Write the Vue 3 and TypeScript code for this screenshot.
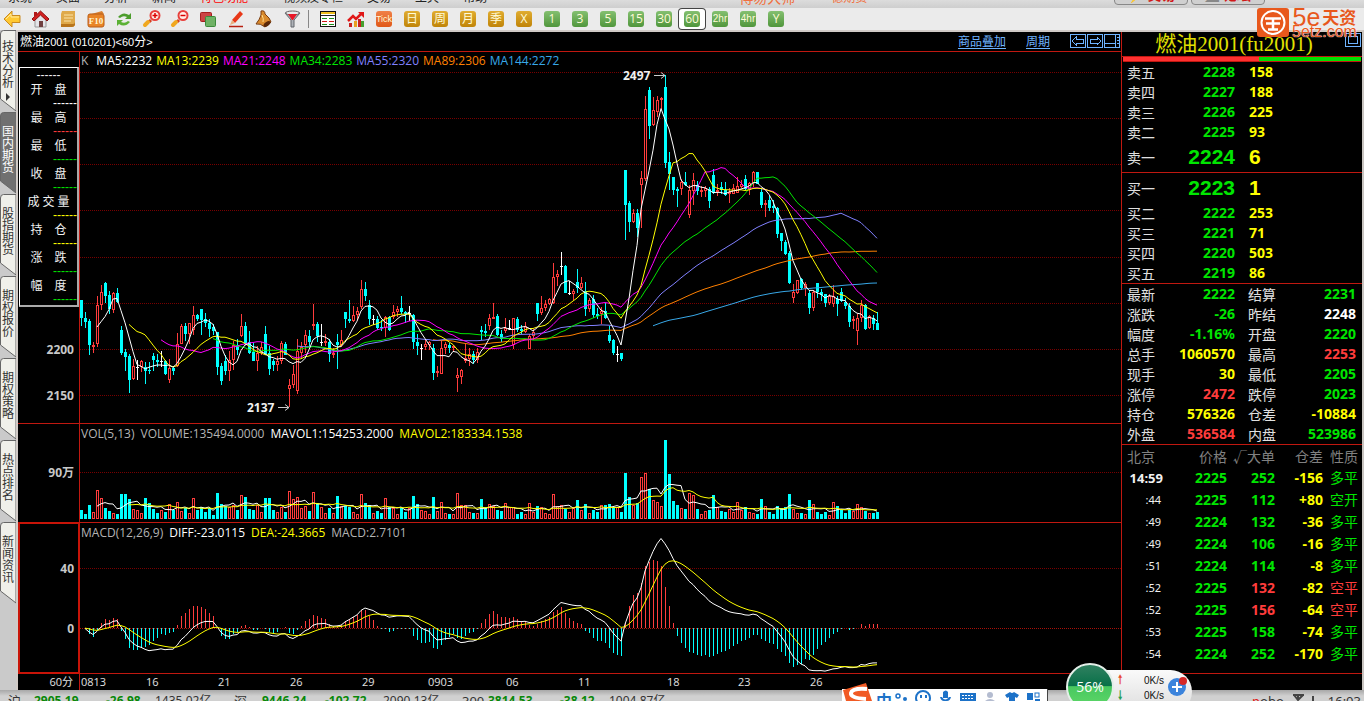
<script setup lang="ts">
type Kind = 'd' | 'u' | 'w'
interface Candle { kind: Kind; x: number; high: number; top: number; bottom: number; low: number; close: number; vol: number }

const STEP = 4
const PRICE_TOP = 70
const VOL_TOP = 442
const VOL_BASE = 519
const MACD_TOP = 541
const MACD_ZERO = 628
const MACD_SCALE = 1.63

// kind, high, body top, body bottom, low (canvas rows)
const rows = `d300 300 318 326,d312 318 322 328,d319 321 345 355,u342 345 347 353,u296 305 344 347,u285 292 305 310,d282 283 296 303,d291 295 309 314,u292 293 310 313,d288 293 302 303,
d326 330 353 355,d349 352 357 371,d354 356 380 393,u359 366 379 380,w360 367 367 380,u360 361 367 372,d362 367 371 384,d362 370 371 374,d353 356 360 371,d354 360 362 367,
w351 361 361 367,d360 361 374 375,u359 368 380 383,d366 368 371 375,u333 344 366 367,u324 326 344 344,d323 326 334 341,u323 323 334 344,u306 315 330 335,d314 315 319 321,
d309 309 320 335,d313 319 323 327,d319 323 329 337,d324 327 331 335,d332 332 367 375,d363 366 381 385,d355 361 371 375,u351 360 371 381,u341 345 360 370,d339 345 350 355,
u314 326 336 337,d322 326 344 345,d331 342 353 354,d343 352 361 361,u346 353 361 371,u342 347 353 355,d326 334 354 355,d346 353 369 375,d359 361 365 371,u356 361 365 371,
u341 343 361 364,d342 344 355 355,u379 385 389 407,u365 374 385 388,u339 351 391 394,u342 347 353 358,u330 335 345 353,d330 336 342 347,u304 324 326 330,d322 324 336 342,
w324 342 342 346,u334 341 343 346,d339 342 354 362,u348 353 355 358,d334 342 345 369,u330 340 345 347,d312 312 319 328,d300 319 321 323,u306 315 321 322,u307 311 315 320,
u280 289 307 309,d282 289 296 301,d300 305 319 325,w315 319 319 325,d316 319 328 330,d320 327 328 331,u316 317 328 337,d316 317 330 331,u305 312 317 319,u306 309 312 317,
d296 308 312 314,d311 312 314 323,w306 313 313 321,d314 315 342 349,d334 342 346 355,w344 348 348 360,u340 344 347 350,u341 342 345 350,d344 348 373 380,u366 371 373 377,
u340 348 374 374,u342 344 348 354,d343 345 348 353,u345 346 348 351,u368 375 378 392,u369 370 377 384,u344 358 361 363,u348 354 359 366,d351 354 360 364,u348 352 360 363,
d326 330 332 340,d324 331 333 337,u314 318 326 330,u303 317 319 319,d314 316 335 336,d330 334 339 342,u318 328 331 333,w320 328 328 330,u318 318 345 349,d317 319 330 332,
d325 329 331 334,u322 326 332 333,u334 336 349 349,u329 332 336 340,d303 303 314 321,u296 308 313 315,u300 304 308 311,u298 299 304 305,u263 277 303 304,u270 274 277 286,
w252 266 266 275,d265 266 293 293,w281 293 293 295,u289 291 294 300,d269 282 288 293,u277 283 288 289,d282 291 309 316,u298 300 309 312,d295 299 315 318,d308 314 316 319,
u307 311 314 324,d303 311 318 319,d326 335 341 343,d339 340 353 355,w346 354 354 362,d353 353 359 361,d170 170 205 240,d201 203 222 232,u209 213 222 223,d209 213 228 237,
u171 178 185 228,u96 109 179 181,d87 90 126 139,u97 110 125 126,u96 100 112 117,u97 98 100 110,d75 87 163 168,d152 162 174 190,d177 177 190 195,d187 189 191 207,
u179 182 189 195,d172 182 185 186,u185 190 215 218,u173 180 191 205,d181 185 191 195,u186 190 192 197,u186 188 191 197,d187 189 201 208,d169 175 193 194,u184 190 192 196,
d182 187 190 194,d182 190 195 196,u188 192 194 203,u184 188 194 194,u177 186 193 193,u180 184 187 188,d175 179 189 190,u182 183 190 195,u171 172 183 187,d172 172 184 184,
d188 192 205 208,u200 203 205 217,d196 200 208 211,d200 206 208 213,d207 208 234 238,d233 233 241 251,d240 242 254 255,d251 253 283 284,u284 292 298 303,u280 280 293 294,
d278 279 288 290,u282 284 288 296,d290 293 308 314,u290 292 308 311,d283 283 292 298,d289 292 295 301,d294 294 303 307,u294 296 303 305,u285 296 304 307,d296 299 304 316,
d288 292 301 302,d298 302 306 309,d303 306 322 327,u316 319 321 329,u314 318 331 345,u300 305 318 322,d304 305 329 330,u315 316 328 329,d315 318 324 330,d312 323 330 330`

const volumes = [
  9, 5, 14, 7, 29, 21, 11, 8, 6, 5, 25, 25, 20, 10, 9, 6, 21, 16, 10, 6,
  9, 7, 15, 9, 17, 8, 11, 6, 21, 9, 12, 7, 11, 4, 26, 15, 13, 12, 14, 9,
  24, 22, 10, 9, 14, 7, 21, 21, 9, 7, 12, 7, 28, 20, 22, 11, 13, 8, 27, 16,
  12, 6, 11, 6, 23, 13, 13, 12, 7, 5, 25, 16, 14, 6, 8, 6, 21, 12, 11, 5,
  11, 7, 11, 23, 15, 9, 8, 5, 22, 8, 17, 6, 5, 5, 26, 14, 14, 7, 6, 6,
  20, 12, 15, 13, 9, 8, 16, 12, 12, 5, 7, 5, 16, 7, 13, 12, 6, 5, 25, 13,
  14, 10, 7, 11, 19, 9, 15, 6, 9, 7, 14, 14, 15, 12, 12, 7, 46, 22, 14, 16,
  42, 46, 30, 19, 17, 13, 79, 45, 18, 14, 11, 10, 26, 24, 10, 5, 8, 9, 24, 12,
  8, 7, 10, 7, 17, 9, 12, 7, 6, 5, 20, 13, 7, 5, 13, 11, 12, 25, 10, 6,
  6, 5, 19, 15, 7, 5, 7, 4, 17, 13, 9, 6, 9, 8, 15, 12, 8, 6, 6, 7,
]

const candles: Candle[] = rows.split(',').map((raw, i) => {
  const s = raw.trim()
  const kind = s[0] as Kind
  const [high, top, bottom, low] = s.slice(1).split(' ').map(Number)
  return { kind, x: i * STEP, high, top, bottom, low, close: kind === 'u' ? top : bottom, vol: volumes[i] }
})
const closes = candles.map(c => c.close)
const color = (k: Kind) => (k === 'u' ? '#ff3c3c' : k === 'd' ? '#00ffff' : '#ffffff')

function average(values: number[], n: number): [number, number][] {
  const out: [number, number][] = []
  let sum = 0
  values.forEach((v, i) => {
    sum += v
    if (i >= n) sum -= values[i - n]
    if (i >= n - 1) out.push([i * STEP + 1, sum / n])
  })
  return out
}
function ema(values: number[], n: number): number[] {
  let e = values[0]
  return values.map(v => (e = e + (2 / (n + 1)) * (v - e)))
}
const path = (pts: [number, number][], f: (v: number) => number) =>
  pts.map(([x, v]) => `${x},${f(v).toFixed(1)}`).join(' ')

const maLines = [
  { n: 144, value: 2272, c: '#38a8e8' }, { n: 89, value: 2306, c: '#ff8000' }, { n: 55, value: 2320, c: '#8080ff' },
  { n: 34, value: 2283, c: '#00e600' }, { n: 21, value: 2248, c: '#ff00ff' }, { n: 13, value: 2239, c: '#ffff00' }, { n: 5, value: 2232, c: '#ffffff' },
].map(m => ({ ...m, pts: path(average(closes, m.n), v => v - PRICE_TOP) }))
const maLegend = [...maLines].reverse()

const volLines = [{ n: 5, c: '#ffffff' }, { n: 13, c: '#ffff00' }]
  .map(m => ({ ...m, pts: path(average(volumes, m.n), v => VOL_BASE - VOL_TOP - v) }))

const fast = ema(closes, 12)
const slow = ema(closes, 26)
const diff = fast.map((v, i) => v - slow[i])
const dea = ema(diff, 9)
const macdY = (v: number) => MACD_ZERO - MACD_TOP + v * MACD_SCALE
const toPts = (a: number[]) => a.map((v, i) => [i * STEP + 1, v] as [number, number]).slice(1)
const diffLine = path(toPts(diff), macdY)
const deaLine = path(toPts(dea), macdY)
const hist = diff.map((v, i) => {
  const h = Math.round((v - dea[i]) * 2 * MACD_SCALE)
  return { x: i * STEP + 1, y: MACD_ZERO - MACD_TOP + Math.min(h, 0), h: Math.abs(h), up: h < 0 }
})

const priceGrid = [72, 118, 164, 210, 257, 303, 349, 395]
const priceLabels = [{ t: '2250', y: 307 }, { t: '2200', y: 354 }, { t: '2150', y: 400 }]
const dates = [
  { t: '0813', x: 1 }, { t: '16', x: 66 }, { t: '21', x: 138 }, { t: '26', x: 210 }, { t: '29', x: 282 }, { t: '0903', x: 348 },
  { t: '06', x: 426 }, { t: '11', x: 498 }, { t: '18', x: 587 }, { t: '23', x: 658 }, { t: '26', x: 730 },
]

const menus = ['系统', '页面', '分析', '新闻', '特色功能', '视频及专栏', '交易', '工具', '帮助']
const tabs = ['技术分析', '国内期货', '股指期货', '期权报价', '期权策略', '热点排名', '新闻资讯']
const periods = [
  { t: '日', c: 'gold' }, { t: '周', c: 'gold' }, { t: '月', c: 'gold' }, { t: '季', c: 'gold' }, { t: 'X', c: 'gold' },
  { t: '1', c: 'green' }, { t: '3', c: 'green' }, { t: '5', c: 'green' }, { t: '15', c: 'green' }, { t: '30', c: 'green' },
  { t: '60', c: 'green' }, { t: '2hr', c: 'green slim' }, { t: '4hr', c: 'green slim' }, { t: 'Y', c: 'green' },
]
const info = [
  { l: '开盘', c: 'white' }, { l: '最高', c: 'red' }, { l: '最低', c: 'lime' }, { l: '收盘', c: 'lime' },
  { l: '成交量', c: 'yellow' }, { l: '持仓', c: 'yellow' }, { l: '涨跌', c: 'lime' }, { l: '幅度', c: 'lime' },
]
const asks = [['卖五', '2228', '158'], ['卖四', '2227', '188'], ['卖三', '2226', '225'], ['卖二', '2225', '93'], ['卖一', '2224', '6']]
const bids = [['买一', '2223', '1'], ['买二', '2222', '253'], ['买三', '2221', '71'], ['买四', '2220', '503'], ['买五', '2219', '86']]
const stats = [
  ['最新', '2222', 'lime', '结算', '2231', 'lime'], ['涨跌', '-26', 'lime', '昨结', '2248', 'white'],
  ['幅度', '-1.16%', 'lime', '开盘', '2220', 'lime'], ['总手', '1060570', 'yellow', '最高', '2253', 'red'],
  ['现手', '30', 'yellow', '最低', '2205', 'lime'], ['涨停', '2472', 'red', '跌停', '2023', 'lime'],
  ['持仓', '576326', 'yellow', '仓差', '-10884', 'yellow'], ['外盘', '536584', 'red', '内盘', '523986', 'lime'],
]
const ticks = [
  ['14:59', '2225', '252', '-156', '多平', 'lime'], [':44', '2225', '112', '+80', '空开', 'lime'],
  [':49', '2224', '132', '-36', '多平', 'lime'], [':49', '2224', '106', '-16', '多平', 'lime'],
  [':51', '2224', '114', '-8', '多平', 'lime'], [':52', '2225', '132', '-82', '空平', 'red'],
  [':52', '2225', '156', '-64', '空平', 'red'], [':53', '2225', '158', '-74', '多平', 'lime'],
  [':54', '2224', '252', '-170', '多平', 'lime'],
]
const indices = [
  { n: '沪', v: '2905.19', d: '-26.98', a: '1435.02亿' },
  { n: '深', v: '9446.24', d: '-102.72', a: '2090.13亿' },
  { n: '300', v: '3814.53', d: '-38.12', a: '1004.87亿' },
]
</script>

<template>
  <div class="app">
    <nav class="menubar">
      <a v-for="m in menus" :key="m" href="#" :class="{ hot: m === '特色功能' }">{{ m }}</a>
      <span class="brand">博易大师</span><span class="brand second">一德期货</span>
      <span class="menu-buttons">
        <button type="button"><i class="bolt">⚡</i>交易</button>
        <button type="button"><i>◢</i>论坛</button>
      </span>
    </nav>

    <div class="toolbar">
      <button type="button" aria-label="后退"><svg width="24" height="22"><path d="M4 11 12 3v4.500h8v7h-8V19z" fill="#ffc832" stroke="#c98a20" /><path d="M6 11l5-5v3h8" fill="none" stroke="#ffe9a0" /></svg></button>
      <button type="button" aria-label="首页"><svg width="24" height="22"><path d="M7 11v8h11v-8l-5-5z" fill="#e4e4e8" stroke="#999" /><path d="M4 11 12.500 3 21 11l-2 2-6.500-6L6 13z" fill="#d42020" stroke="#8c1010" /><path d="M6 4h3v3l-3 2z" fill="#b01818" /><path d="M11 13h4v6h-4z" fill="#704040" /></svg></button>
      <button type="button" aria-label="笔记"><svg width="24" height="22"><path d="M6 3h13v14q-1 2-3 2H5V6z" fill="#dfa94a" /><path d="M8 7h9M8 10h9M8 13h7" stroke="#fbe3a6" /><path d="M5 16h12q2 0 2-2v3q-1 2-3 2H5z" fill="#b9761c" /></svg></button>
      <button type="button" aria-label="F10"><svg width="24" height="22"><path d="M4 7 18 3l2 3H6z" fill="#d98030" /><rect x="4" y="6" width="16" height="13" rx="2" fill="#e98426" stroke="#b85c18" /><text x="12" y="16" text-anchor="middle" font-size="9" font-weight="700" font-family="Liberation Serif" fill="#fff4d0">F10</text></svg></button>
      <button type="button" aria-label="刷新"><svg width="24" height="22"><path d="M6 9q5-6 11-2l2-2v6h-6l2-2q-4-2-7 1z" fill="#4c9d2c" /><path d="M18 14q-5 6-11 2l-2 2v-6h6l-2 2q4 2 7-1z" fill="#5bb135" /></svg></button>
      <button type="button" aria-label="放大"><svg width="24" height="22"><path d="m11 12-2 2" stroke="#d84020" stroke-width="3" /><path d="m8 14-3 3" stroke="#f0a820" stroke-width="4" stroke-linecap="round" /><circle cx="15" cy="7.500" r="4.500" fill="#fff0e8" stroke="#e8403c" stroke-width="2" /><path d="M12.500 7.500h5M15 5v5" stroke="#d00" stroke-width="1.500" /></svg></button>
      <button type="button" aria-label="缩小"><svg width="24" height="22"><path d="m11 12-2 2" stroke="#d84020" stroke-width="3" /><path d="m8 14-3 3" stroke="#f0a820" stroke-width="4" stroke-linecap="round" /><circle cx="15" cy="7.500" r="4.500" fill="#fff0e8" stroke="#e8403c" stroke-width="2" /><path d="M12.500 7.500h5" stroke="#d00" stroke-width="1.500" /></svg></button>
      <button type="button" aria-label="叠加"><svg width="24" height="22"><rect x="4.500" y="4.500" width="11" height="9" rx="1" fill="#cc4444" stroke="#a42020" /><rect x="9.500" y="8.500" width="10" height="10" rx="1" fill="#6fb266" stroke="#3c8a3c" /></svg></button>
      <button type="button" aria-label="画线"><svg width="24" height="22"><path d="m8 12 8-9 3 3-8 9z" fill="#e83818" /><path d="m8 12 3 3-5 2z" fill="#e8b080" /><path d="M5 18.500h14" stroke="#b82010" stroke-width="1.500" /></svg></button>
      <button type="button" aria-label="预警"><svg width="24" height="22"><path d="M9 3q4-1 4 3 5 4 6 8l-6 5Q8 15 4 16q4-5 5-9z" fill="#d98a2c" stroke="#7a3c10" /><ellipse cx="15" cy="16" rx="4" ry="2" transform="rotate(-35 15 16)" fill="#5a2808" /><path d="M10 7q2 4 1 7" stroke="#ffdc8c" fill="none" /></svg></button>
      <button type="button" aria-label="筛选"><svg width="24" height="22"><path d="m5 5 6 7v7h3v-7l6-7z" fill="#aeb2b8" stroke="#62666c" /><ellipse cx="12.500" cy="5" rx="7" ry="2" fill="#e8e8ea" stroke="#666" /><path d="M8 6h9l-4 6h-1z" fill="#e81828" /></svg></button>
      <span class="sep"></span>
      <button type="button" aria-label="报价"><svg width="24" height="22" shape-rendering="crispEdges"><rect x="4.500" y="3.500" width="15" height="15" fill="#fff" stroke="#111" /><path d="M5 5h14" stroke="#f0c020" stroke-width="2" /><path d="M5 7.500h14" stroke="#222" /><path d="M6 10.500h5m2 0h5M6 16.500h5m2 0h5" stroke="#189018" /><path d="M6 13.500h5m2 0h5" stroke="#d01818" /></svg></button>
      <button type="button" aria-label="走势"><svg width="24" height="22"><path d="M5 15h3v4H5zM14 11h3v8h-3z" fill="#c82020" /><path d="M10 13h3v6h-3z" fill="#e8a020" /><path d="M17 13h3v6h-3z" fill="#48a030" /><path d="m4 13 5-5 3 3 6-6" fill="none" stroke="#e01818" stroke-width="2.500" /><path d="M14 4h6v6z" fill="#e01818" /></svg></button>
      <button type="button"><span class="chip tick">Tick</span></button>
      <button v-for="p in periods" :key="p.t" type="button" :class="{ current: p.t === '60' }"><span class="chip" :class="p.c">{{ p.t }}</span></button>
    </div>

    <main class="body">
      <div class="tabs">
        <div v-for="(t, i) in tabs" :key="t" class="tab" :class="{ active: i === 1 }">
          <svg class="tab-shape" width="16" height="82"><path d="M0.500 69V4q0-3.500 3-3.500H16V81z" /></svg>
          <button type="button" :class="{ first: i === 0 }">{{ t }}<i v-if="i === 0"></i></button>
        </div>
      </div>

      <section class="chart">
        <header class="head">
          <h1><b>燃油</b>2001 (010201)&lt;60<b>分</b>&gt;</h1>
          <div class="links">
            <a href="#">商品叠加</a><a href="#">周期</a>
            <svg width="51" height="15" fill="none" stroke="#6fb4ff" shape-rendering="crispEdges">
              <rect x="0.500" y="0.500" width="15" height="13" /><rect x="17.500" y="0.500" width="15" height="13" /><rect x="34.500" y="0.500" width="15" height="13" />
              <path d="m2 7 4-4v2h7v4H6v2zM31 7l-4-4v2h-7v4h7v2zM34 9.500h11M45.500 1v12M47 3.500h2M47 6.500h2M47 9.500h2" />
            </svg>
          </div>
        </header>

        <div class="pane">
          <div class="axis">
            <svg width="61" height="371"><text v-for="l in priceLabels" :key="l.t" x="56" :y="l.y - 52" text-anchor="end" class="label">{{ l.t }}</text></svg>
            <div class="info">
              <p class="dash center">------</p>
              <template v-for="r in info" :key="r.l">
                <p class="name"><span v-for="ch in r.l" :key="ch">{{ ch }}</span></p>
                <p class="dash" :class="r.c">------</p>
              </template>
            </div>
          </div>
          <div class="plot">
            <div class="legend"><span class="gray k">K</span><span v-for="m in maLegend" :key="m.n" :style="{ color: m.c }">MA{{ m.n }}:{{ m.value }}</span></div>
            <svg class="canvas" height="353">
              <line v-for="y in priceGrid" :key="y" x1="0" x2="100%" :y1="y - 70 + 0.5" :y2="y - 70 + 0.5" class="grid" />
              <g shape-rendering="crispEdges">
                <g v-for="c in candles" :key="c.x">
                  <rect :x="c.x + 1" :y="c.high - PRICE_TOP" width="1" :height="Math.max(1, c.low - c.high)" :fill="color(c.kind)" />
                  <rect :x="c.x" :y="c.top - PRICE_TOP" width="3" :height="Math.max(1, c.bottom - c.top)" :fill="color(c.kind)" />
                  <rect v-if="c.kind === 'u' && c.bottom - c.top > 2" :x="c.x + 1" :y="c.top - PRICE_TOP + 1" width="1" :height="c.bottom - c.top - 2" fill="#000" />
                </g>
              </g>
              <polyline v-for="m in maLines" :key="m.n" :points="m.pts" fill="none" :stroke="m.c" />
              <text x="543" y="10" class="mark">2497</text><path d="M574 5.500h11m-4-3 4 3-4 3" class="arrow" />
              <text x="167" y="342" class="mark">2137</text><path d="M198 337.500h11m-4-3 4 3-4 3" class="arrow" />
            </svg>
          </div>
        </div>

        <div class="pane">
          <div class="axis"><svg width="61" height="98"><text x="56" y="53" text-anchor="end" class="label">90万</text></svg></div>
          <div class="plot">
            <div class="legend wide"><span class="gray">VOL(5,13)</span><span class="gray">VOLUME:135494.0000</span><span class="white">MAVOL1:154253.2000</span><span class="yellow">MAVOL2:183334.1538</span></div>
            <svg class="canvas" height="80">
              <line x1="0" x2="100%" y1="30.500" y2="30.500" class="grid" />
              <g shape-rendering="crispEdges">
                <g v-for="c in candles" :key="c.x">
                  <rect :x="c.x" :y="VOL_BASE - VOL_TOP - c.vol" width="3" :height="c.vol" :fill="c.kind === 'd' ? '#00ffff' : '#ff3c3c'" />
                  <rect v-if="c.kind !== 'd'" :x="c.x + 1" :y="VOL_BASE - VOL_TOP - c.vol + 1" width="1" :height="c.vol - 2" fill="#000" />
                </g>
              </g>
              <polyline v-for="m in volLines" :key="m.n" :points="m.pts" fill="none" :stroke="m.c" />
            </svg>
          </div>
        </div>

        <div class="pane">
          <div class="axis focus">
            <svg width="61" height="150"><text x="56" y="50" text-anchor="end" class="label">40</text><text x="56" y="110" text-anchor="end" class="label">0</text></svg>
          </div>
          <div class="plot">
            <div class="legend wide"><span class="gray">MACD(12,26,9)</span><span class="white">DIFF:-23.0115</span><span class="yellow">DEA:-24.3665</span><span class="gray">MACD:2.7101</span></div>
            <svg class="canvas" height="132">
              <line x1="0" x2="100%" y1="27.500" y2="27.500" class="grid" />
              <line x1="0" x2="100%" y1="87.500" y2="87.500" class="grid zero" />
              <g shape-rendering="crispEdges"><rect v-for="h in hist" :key="h.x" :x="h.x" :y="h.y" width="1" :height="h.h" :fill="h.up ? '#ff3c3c' : '#00ffff'" /></g>
              <polyline :points="diffLine" fill="none" stroke="#fff" />
              <polyline :points="deaLine" fill="none" stroke="#ff0" />
            </svg>
          </div>
        </div>

        <div class="pane last">
          <div class="axis"><svg width="61" height="16"><text x="55" y="12" text-anchor="end" class="date">60分</text></svg></div>
          <div class="plot"><svg class="canvas" height="16"><text v-for="d in dates" :key="d.x" :x="d.x" y="12" class="date">{{ d.t }}</text></svg></div>
        </div>
      </section>

      <aside class="quote">
        <div class="quote-main">
          <h2>燃油2001(fu2001)<button type="button" aria-label="还原"></button></h2>
          <div class="ratio"><span></span></div>
          <table class="book">
            <tbody><tr v-for="(r, i) in asks" :key="r[0]" :class="{ big: i === 4 }"><th>{{ r[0] }}</th><td class="lime">{{ r[1] }}</td><td class="yellow qty">{{ r[2] }}</td></tr></tbody>
          </table>
          <table class="book">
            <tbody><tr v-for="(r, i) in bids" :key="r[0]" :class="{ big: i === 0 }"><th>{{ r[0] }}</th><td class="lime">{{ r[1] }}</td><td class="yellow qty">{{ r[2] }}</td></tr></tbody>
          </table>
          <table class="stats">
            <tbody><tr v-for="r in stats" :key="r[0]"><th>{{ r[0] }}</th><td :class="r[2]">{{ r[1] }}</td><th class="second">{{ r[3] }}</th><td :class="r[5]">{{ r[4] }}</td></tr></tbody>
          </table>
          <table class="ticks">
            <thead><tr><th>北京</th><th>价格</th><th>√大单</th><th>仓差</th><th>性质</th></tr></thead>
            <tbody>
              <tr v-for="(r, i) in ticks" :key="i">
                <td class="time" :class="{ full: i === 0 }">{{ r[0] }}</td><td class="lime">{{ r[1] }}</td><td :class="r[5]">{{ r[2] }}</td><td class="yellow">{{ r[3] }}</td><td class="nature" :class="r[5]">{{ r[4] }}</td>
              </tr>
            </tbody>
          </table>
        </div>
      </aside>
    </main>

    <footer class="status">
      <span v-for="x in indices" :key="x.n" class="index"><span class="n">{{ x.n }}</span><b>{{ x.v }}</b><b>{{ x.d }}</b><span class="a">{{ x.a }}</span></span>
      <span class="right"><span><em>p</em>obo</span>
        <svg width="28" height="14" fill="none" stroke="#444" stroke-width="2"><path d="M1 3h11M2 3l4 5 5-5M6 3v11M17 14v-3M21 14V4" /></svg>
        <time>16:03</time></span>
    </footer>

    <div class="logo">
      <svg width="32" height="29"><rect width="32" height="29" rx="3" fill="#e8581c" /><circle cx="16" cy="14.500" r="11.500" fill="none" stroke="#fff" stroke-width="2" /><path d="M8 10.500h16M16 10.500v5H9M16 15.500h7M16 15.500v6M11 21.500h10" fill="none" stroke="#fff" stroke-width="2.500" /></svg>
      <div><p class="name"><i>5e</i>天资</p><p class="site">5etz.com</p></div>
    </div>

    <div class="ime">
      <svg class="sogou" width="30" height="18"><path d="M1 7 24 0l6 18H4z" fill="#f15a24" /><path d="M25 6Q10 5 9 10t15 6" fill="none" stroke="#fff" stroke-width="4" /></svg>
      <span>中</span>
      <svg width="156" height="12" fill="#1d72c8">
        <circle cx="6" cy="7" r="2" fill="none" stroke="#1d72c8" stroke-width="1.500" /><circle cx="13" cy="10" r="2" />
        <circle cx="31" cy="9" r="7" fill="none" stroke="#1d72c8" stroke-width="2" /><path d="M28 6h2v3h-2zM33 6h2v3h-2z" />
        <path d="M51 3q3-3 5 0v6h-5zM48 8h2q3 5 7 0h2q-1 4-4 4h-3q-3 0-4-4z" />
        <path d="M68 4h16v8H68z" /><path d="M70 6.500h12M70 9.500h12" stroke="#fff" stroke-dasharray="2 1" />
        <circle cx="98" cy="6" r="3" fill="#b4bcd0" /><path d="M93 12q5-4 10 0z" fill="#b4bcd0" />
        <path d="M113 6l5-3q2 2 4 0l5 3-2 3-2-1v4h-6V8l-2 1z" /><rect x="135" y="4" width="6" height="7" /><rect x="143" y="4" width="4" height="4" fill="none" stroke="#1d72c8" /><rect x="143" y="10" width="5" height="2" />
      </svg>
    </div>

    <div class="net">
      <div class="ball">56%</div>
      <div class="speed"><p><i class="up">🠑</i>0K/s</p><p><i class="down">🠓</i>0K/s</p></div>
      <svg width="20" height="24"><circle cx="9" cy="14" r="9" fill="#3c84dc" /><path d="M4 14h10M9 9v10" stroke="#fff" stroke-width="2" /><circle cx="15" cy="8" r="4" fill="#d42828" /></svg>
    </div>
  </div>
</template>

<style>
html, body { margin: 0; background: #000; }
</style>

<style scoped>
.app { position: relative; display: flex; flex-direction: column; height: 100vh; overflow: hidden; font-family: "Open Sans", "Noto Sans CJK SC", sans-serif; font-size: 12px; color: #e0e0e0; background: #000; }
p, h1, h2 { margin: 0; font-weight: 400; }
button { padding: 0; border: 0; background: none; font: inherit; color: inherit; }
i, em { font-style: normal; }
.white { color: #fff; } .yellow { color: #ff0; } .lime { color: #00e600; } .red { color: #ff3c3c; } .gray { color: #b4b4b4; }

.menubar { display: flex; align-items: flex-end; height: 8px; flex: none; padding-left: 8px; gap: 24px; overflow: hidden; background: linear-gradient(#dcdcdc, #cecece); line-height: 14px; }
.menubar a { color: #222; text-decoration: none; font-size: 12px; margin-bottom: 3px; white-space: nowrap; }
.menubar a:nth-child(6) { margin-left: 11px; }
.menubar .hot { color: #f00; }
.brand { margin: 0 0 3px 228px; color: #f07040; font-size: 14px; white-space: nowrap; }
.brand.second { margin-left: 0; font-size: 12px; }
.menu-buttons { margin-left: auto; margin-right: 99px; display: flex; gap: 3px; margin-bottom: 3px; }
.menu-buttons button { width: 74px; height: 20px; border: 1px solid #888; border-radius: 4px; background: #d0d0d0; color: #d01818; font-weight: 700; font-size: 14px; line-height: 18px; }
.menu-buttons i { color: #888; margin-right: 4px; }
.menu-buttons .bolt { color: #e08020; }

.toolbar { display: flex; align-items: center; gap: 4px; height: 22px; flex: none; background: #ebebeb; }
.toolbar button { display: flex; justify-content: center; align-items: center; width: 24px; height: 22px; flex: none; }
.toolbar .current { width: 28px; margin: 0 -2px; height: 22px; background: #fff; box-shadow: inset 0 0 0 1px #444; border-radius: 4px; }
.sep { width: 1px; height: 18px; margin-right: 3px; background: #888; }
.chip { display: flex; justify-content: center; width: 16px; height: 16px; border-radius: 3px; line-height: 16px; font-size: 12px; color: #fffbd8; white-space: nowrap; }
.gold { background: linear-gradient(#e0ac30, #c08408); }
.green { background: linear-gradient(#84c070, #50963c); font-size: 12px; }
.tick { background: linear-gradient(#f08048, #e05818); font: 9px/16px "Liberation Sans", sans-serif; }
.slim { font: 10px/16px "Liberation Sans", sans-serif; }

.body { display: flex; flex: none; }
.tabs { width: 16px; flex: none; background: #cacaca; color: #333; }
.tab { position: relative; height: 82px; }
.tab-shape { position: absolute; inset: 0; fill: #f0f0ea; stroke: #666; }
.tab button { position: relative; display: block; width: 16px; padding: 14px 2px 0; line-height: 12px; font-size: 12px; word-break: break-all; text-align: center; }
.tab .first { padding-top: 11px; }
.tab i { display: block; width: 0; margin: 4px auto 0; border: 4px solid transparent; border-left-color: #333; border-right: 0; }
.tab.active .tab-shape { fill: #707070; }
.tab.active { color: #fff; }

.chart { flex: 1; min-width: 0; border: solid #d0cac6; border-width: 2px 0 0 2px; background: #000; }
.head { display: flex; justify-content: space-between; align-items: center; height: 19px; border-bottom: 1px solid #c01810; }
.head h1 { font: 11px/18px "Liberation Sans", "Noto Sans CJK SC", sans-serif; color: #fff; padding-left: 2px; white-space: nowrap; }
.head b { font-size: 12px; font-weight: 400; }
.links { display: flex; align-items: center; gap: 20px; line-height: 14px; }
.links a { color: #6fb4ff; text-underline-offset: 2px; }
.pane { display: flex; border-bottom: 1px solid #c01810; }
.pane.last { border-bottom: 0; }
.axis { position: relative; width: 61px; flex: none; border-right: 1px solid #c01810; }
.axis svg { display: block; }
.focus::after { content: ""; position: absolute; inset: -1px -1px -1px 0; border: 2px solid #c81408; }
.plot { flex: 1; min-width: 0; }
.legend { display: flex; gap: 4px; height: 18px; line-height: 18px; padding-left: 1px; white-space: nowrap; }
.legend.wide { gap: 6px; line-height: 20px; }
.k { margin-right: 4px; }
.canvas { display: block; width: 100%; overflow: visible; }
.grid { stroke: #780000; stroke-dasharray: 1 1; shape-rendering: crispEdges; }
.zero { stroke: #a81008; }
.label, .mark { font: 700 12px "Noto Sans", "Noto Sans CJK SC", sans-serif; fill: #c8c8c8; }
.mark { fill: #f0f0f0; }
.date { font: 11px "Open Sans", "Noto Sans CJK SC", sans-serif; fill: #e0e0e0; }
.arrow { fill: none; stroke: #ccc; }
.info { position: absolute; left: 1px; top: 15px; width: 60px; height: 240px; box-sizing: border-box; border: 1px solid #fff; border-right: 2px solid #aaa; border-bottom: 2px solid #aaa; background: #000; color: #f0f0f0; }
.info p { line-height: 14px; height: 14px; }
.info .name { line-height: 16px; }
.info .dash { font-family: "Liberation Sans", sans-serif; text-align: right; }
.info .dash.center { text-align: center; }
.name { display: flex; justify-content: center; gap: 12px; }
.info .name:has(span:nth-child(3)) { gap: 3px; }

.quote { display: flex; width: 243px; flex: none; box-sizing: border-box; border-top: 2px solid #d0cac6; border-right: 2px solid #c8c4c0; background: #000; }
.quote-main { flex: 1; border-left: 1px solid #c01810; border-bottom: 1px solid #c01810; margin-bottom: 16px; }
h2 { position: relative; height: 24px; border-bottom: 1px solid #c01810; text-align: center; font: 21px/24px "Liberation Serif", "Noto Sans CJK SC", sans-serif; font-weight: 400; color: #e0e000; padding-right: 16px; white-space: nowrap; }
h2 button { position: absolute; right: 1px; top: 1px; width: 16px; height: 14px; border: 1px solid #6fb4ff; outline: 1px solid #6fb4ff; outline-offset: -4px; }
.ratio { height: 4px; margin: 0 1px; background: #00e000; border-bottom: 1px solid #c01810; }
.ratio span { display: block; width: 57%; height: 4px; background: #ff3030; }
table { width: 100%; border-collapse: collapse; table-layout: fixed; }
.book, .stats { border-bottom: 1px solid #c01810; border-collapse: separate; border-spacing: 0; }
th, td { padding: 0; height: 20px; line-height: 20px; text-align: right; font-size: 14px; white-space: nowrap; }
th { font-family: "Noto Sans CJK SC", sans-serif; font-weight: 400; text-align: left; padding-left: 5px; color: #e0e0e0; }
td { font-family: "Noto Sans", "Noto Sans CJK SC", sans-serif; font-weight: 700; }
.book th, .stats th { line-height: 18px; }
.book th { width: 41px; } .book td { width: 67px; } .book .qty { width: auto; text-align: left; padding-left: 14px; }
.book .big th, .book .big td { height: 30px; line-height: 30px; }
.book .big td { font-family: "Liberation Sans", sans-serif; font-size: 21px; }
.stats th { width: 35px; } .stats td { width: 73px; } .stats .second { padding-left: 13px; width: 35px; } .stats td:last-child { width: auto; padding-right: 6px; }
.ticks th, .ticks td { height: 22px; line-height: 22px; }
.ticks th { width: 64px; padding: 0; text-align: right; color: #808080; }
.ticks th:first-child { width: 36px; padding-left: 5px; text-align: left; }
.ticks th:nth-child(3), .ticks th:nth-child(4) { width: 48px; }
.ticks th:last-child { width: auto; padding-right: 4px; }
.ticks .time { color: #f0f0f0; font-weight: 400; font-size: 11px; padding-right: 2px; }
.ticks .time.full { font-weight: 700; font-size: 13px; padding-right: 0; }
.ticks .nature { font-weight: 400; padding-right: 4px; }

.status { display: flex; align-items: flex-start; flex: 1; min-height: 0; overflow: hidden; padding: 2px 3px 0 8px; background: linear-gradient(#a8a8a8, #d0d0d0 6px); color: #333; font: 12px/18px "Noto Sans", "Noto Sans CJK SC", sans-serif; white-space: nowrap; }
.index { display: grid; grid-template-columns: 26px 72px 49px 79px; }
.index .n { font-size: 13px; }
.index:nth-child(2) { grid-template-columns: 28px 63px 58px 79px; }
.index b { color: #088808; }
.right { display: flex; margin-left: auto; gap: 8px; font-size: 13px; }
.right em { color: #e01818; }

.logo { position: absolute; top: 8px; right: 2px; display: flex; gap: 3px; width: 105px; height: 30px; color: #e8581c; }
.logo .name { font: 700 17px/18px "Noto Sans CJK SC", sans-serif; display: flex; gap: 0; align-items: center; }
.logo .name i { font: 25px/18px "Liberation Sans", sans-serif; margin-right: 2px; }
.logo .site { font: 16px/12px "Liberation Sans", sans-serif; text-shadow: 0 0 1px #fff, 0 0 1px #fff; }

.ime { position: absolute; left: 842px; bottom: 0; display: flex; align-items: flex-end; width: 206px; height: 12px; background: #fff; color: #1d72c8; font: 700 16px/12px "Noto Sans CJK SC", sans-serif; }
.ime::after { content: ""; position: absolute; right: 0; width: 1px; height: 12px; background: #444; }
.ime span { margin: 0 0 -5px 4px; }
.sogou { flex: none; }

.net { position: absolute; right: 172px; bottom: -12px; display: flex; align-items: flex-start; width: 102px; height: 43px; border-radius: 0 22px 22px 0; background: linear-gradient(#fafafa, #dcdcdc); color: #111; }
.ball { position: absolute; left: -24px; top: -7px; width: 44px; height: 44px; border: 2px solid #e4eee8; border-radius: 50%; background: linear-gradient(#308060, #087048 48%, #48c860 49%, #60d868); color: #fff; font-size: 14px; line-height: 44px; text-align: center; }
.speed { margin: 3px 0 0 28px; font: 10px/15px "Liberation Sans", sans-serif; }
.speed p { display: flex; white-space: nowrap; }
.speed i { width: 26px; font: 700 12px/15px "DejaVu Sans", sans-serif; }
.up { color: #e84c30; } .down { color: #28a050; }
.net svg { margin: 3px 0 0 4px; flex: none; }
</style>
